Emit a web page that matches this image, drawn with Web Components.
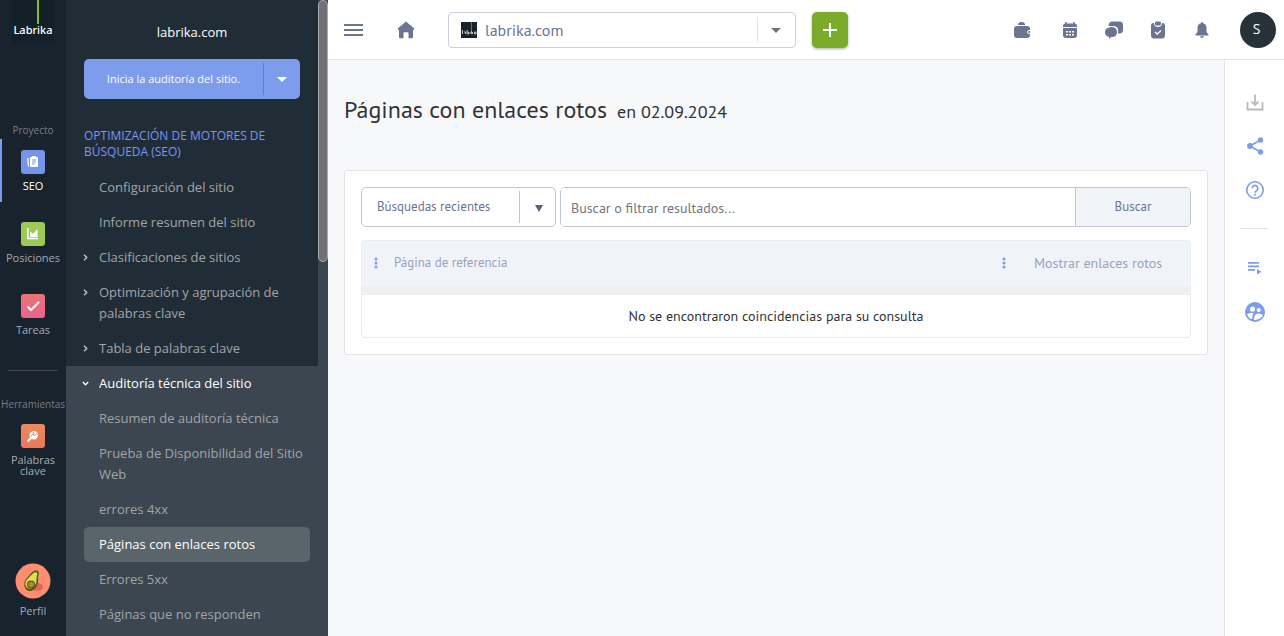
<!DOCTYPE html>
<html lang="es">
<head>
<meta charset="utf-8">
<meta name="viewport" content="width=device-width, initial-scale=1">
<title>Páginas con enlaces rotos</title>
<style>
  html, body { margin: 0; height: 100%; }
  body {
    background: #f7f8fa;
    font-family: "Open Sans", "Noto Sans", sans-serif;
    --ui: "PT Sans", "Noto Sans", "Open Sans", sans-serif;
    --accent: #7d9cec;
    --slate: #6b7591;
    --line: #e4e3ea;
  }
</style>
</head>
<body>
<lk-app>
  <lk-rail slot="rail">
    <lk-rail-caption>Proyecto</lk-rail-caption>
    <lk-rail-item icon="seo" active>SEO</lk-rail-item>
    <lk-rail-item icon="positions">Posiciones</lk-rail-item>
    <lk-rail-item icon="tasks">Tareas</lk-rail-item>
    <lk-rail-caption divided>Herramientas</lk-rail-caption>
    <lk-rail-item icon="keywords">Palabras clave</lk-rail-item>
    <lk-rail-item slot="bottom" icon="profile">Perfil</lk-rail-item>
  </lk-rail>
  <lk-sidebar slot="sidebar">
    <lk-nav-item>Configuración del sitio</lk-nav-item>
    <lk-nav-item>Informe resumen del sitio</lk-nav-item>
    <lk-nav-item arrow>Clasificaciones de sitios</lk-nav-item>
    <lk-nav-item arrow>Optimización y agrupación de palabras clave</lk-nav-item>
    <lk-nav-item arrow>Tabla de palabras clave</lk-nav-item>
    <lk-nav-group>
      <lk-nav-item arrow open>Auditoría técnica del sitio</lk-nav-item>
      <lk-nav-item>Resumen de auditoría técnica</lk-nav-item>
      <lk-nav-item>Prueba de Disponibilidad del Sitio Web</lk-nav-item>
      <lk-nav-item>errores 4xx</lk-nav-item>
      <lk-nav-item current>Páginas con enlaces rotos</lk-nav-item>
      <lk-nav-item>Errores 5xx</lk-nav-item>
      <lk-nav-item>Páginas que no responden</lk-nav-item>
    </lk-nav-group>
  </lk-sidebar>
  <lk-topbar slot="top"></lk-topbar>
  <lk-report slot="main">
    <lk-filter></lk-filter>
    <lk-table></lk-table>
  </lk-report>
  <lk-tools slot="tools"></lk-tools>
</lk-app>

<script>
const define = (name, html) => customElements.define(name, class extends HTMLElement {
  constructor() {
    super();
    const t = document.createElement('template');
    t.innerHTML = '<style>:host,*{box-sizing:border-box} button,a,input,select{font-family:inherit;color:inherit} svg{display:block;flex:none}</style>' +
      (typeof html === 'function' ? html(this) : html);
    this.attachShadow({ mode: 'open' }).append(t.content.cloneNode(true));
  }
});

define('lk-app', `
<style>
  :host { display: grid; grid-template: auto 1fr / 66px 262px 1fr 60px; height: 100vh; overflow: hidden; }
  .rail, .side { grid-row: 1 / 3; min-height: 0; display: grid; }
  .rail { grid-column: 1; } .side { grid-column: 2; }
  header { grid-area: 1 / 3 / 2 / 5; }
  main { grid-area: 2 / 3; min-width: 0; overflow: auto; }
  aside { grid-area: 2 / 4; display: grid; }
</style>
<div class="rail"><slot name="rail"></slot></div>
<div class="side"><slot name="sidebar"></slot></div>
<header><slot name="top"></slot></header>
<main><slot name="main"></slot></main>
<aside><slot name="tools"></slot></aside>`);

define('lk-rail', `
<style>
  :host { display: block; background: #18232d; color: #a5abb0; overflow: hidden; }
  nav { display: flex; flex-direction: column; height: 100%; padding-bottom: 8px; }
  .logo { width: 42px; height: 43px; margin: 0 12px 79px; background: #142028; color: #fff; text-decoration: none;
    display: grid; grid-template-rows: 23px 16px; justify-items: center; font: 500 11px/14px "Noto Sans", sans-serif; }
  .logo i { width: 2px; height: 24px; background: #8db92e; margin-left: 10px; }
  .end { margin-top: auto; }
</style>
<nav aria-label="Principal">
  <a class="logo" href="#"><i></i><span>Labrika</span></a>
  <slot></slot>
  <div class="end"><slot name="bottom"></slot></div>
</nav>`);

define('lk-rail-caption', `
<style>
  :host { display: block; text-align: center; font-size: 10px; line-height: 16px; color: #7b7e83; white-space: nowrap; padding-bottom: 1px; }
  :host([divided]) { margin-top: 15px; }
  hr { display: none; border: 0; height: 1px; background: #43474d; margin: 0 8px 25px; }
  :host([divided]) hr { display: block; }
</style><hr><slot></slot>`);

const railIcons = {
  seo: `<rect width="24" height="24" rx="3" fill="#7495ea"/><g fill="#fff"><rect x="9" y="7" width="8" height="10" rx="1"/><rect x="11" y="6" width="4" height="2"/><path d="M6 8h1.500l.5 8.500H7z"/></g><path d="M11 10h4M11 12h4M11 14h2.500" stroke="#7495ea"/>`,
  positions: `<rect width="24" height="24" rx="3" fill="#9bcb55"/><path d="M6.800 6v10.500H17" fill="none" stroke="#fff" stroke-width="1.600"/><path d="M9 15V9.500l2.800 2.200L16.500 7v8z" fill="#fff"/>`,
  tasks: `<defs><linearGradient id="g" x2="0" y2="1"><stop stop-color="#ea7379"/><stop offset="1" stop-color="#e9658a"/></linearGradient></defs><rect width="24" height="24" rx="3" fill="url(#g)"/><path d="M6.500 12.500l3.500 3.500 8-8" fill="none" stroke="#fff" stroke-width="2"/>`,
  keywords: `<defs><linearGradient id="g" x2="0" y2="1"><stop stop-color="#eb8b5b"/><stop offset="1" stop-color="#e9785e"/></linearGradient></defs><rect width="24" height="24" rx="3" fill="url(#g)"/><path d="M10.500 13.500L6.500 17.500" stroke="#fff" stroke-width="2.200"/><circle cx="12.800" cy="11.200" r="4.200" fill="#fff"/><path d="M10 12l2-2 1.500 2 2.500-3M12 8l1 2" fill="none" stroke="#e9825c"/>`,
  profile: `<circle cx="18" cy="18" r="17.500" fill="#ff8d70"/><ellipse cx="22" cy="24" rx="6" ry="4" fill="#dd6a56"/><path d="M19 8c3-1.500 6 1 4.500 4-1 3 .5 5.500-1 9-1.500 5-6 8.500-10 6.500-4-2.500-4-8.500-1-12 3-3 4-6 7.500-7.500z" fill="#4b5c1d"/><path d="M19.500 9.500c2-1 3.500.5 2.500 3-1 3 0 5-1 8-1.500 4-5 6.500-8.500 4.500-3-2-2.500-6.500 0-9 3-3 4-5 7-6.500z" fill="#dfe050"/><circle cx="16" cy="21.500" r="4" fill="#6c4c24"/><circle cx="16" cy="21.500" r="2.800" fill="#b78638"/>`
};
define('lk-rail-item', el => {
  const k = el.getAttribute('icon'), big = k === 'profile';
  return `
<style>
  :host { display: block; margin-bottom: 9px; }
  a { display: flex; flex-direction: column; align-items: center; gap: 6px; padding: ${big ? 0 : 11}px 8px ${big ? 12 : 11}px; font-size: 11px; line-height: 11px; text-align: center; text-decoration: none; border-left: 2px solid transparent; border-right: 2px solid transparent; }
  :host([active]) a { border-left-color: #7d9cec; color: #fff; }
  :host([icon=profile]) { margin-bottom: 0; }
  span { margin: 0 -8px; }
  :host([icon=keywords]) span { margin: 0 -2px; }
</style>
<a href="#"><svg width="${big ? 36 : 24}" height="${big ? 36 : 24}" aria-hidden="true">${railIcons[k]}</svg><span><slot></slot></span></a>`;
});

define('lk-sidebar', `
<style>
  :host { display: grid; grid-template-columns: 1fr 10px; background: #212d36; overflow: hidden; min-height: 0; }
  .body { min-width: 0; overflow: hidden; }
  .site { margin: 0; padding: 22px 0 17px; text-align: center; font-size: 13px; line-height: 20px; color: #fff; font-weight: 400; }
  .start { display: flex; height: 40px; margin: 0 18px; border-radius: 5px; background: var(--accent); color: #fff; overflow: hidden; align-items: center; }
  button { border: 0; background: none; padding: 0; height: 32px; font-size: 11px; }
  .go { flex: 1; padding-bottom: 2px; } .more { width: 37px; border-left: 1px solid #5c7fd0; display: grid; place-items: center; }
  h2 { margin: 29px 18px 10px; font-size: 12px; line-height: 16px; font-weight: 400; color: #7397fb; }
  .track { background: #3b4650; }
  .thumb { height: 262px; border-radius: 5px; background: #717176; border: 1px solid #a9abae; }
</style>
<div class="body">
  <p class="site">labrika.com</p>
  <div class="start"><button class="go">Inicia la auditoría del sitio.</button>
  <button class="more" aria-label="Más opciones"><svg width="10" height="5"><path d="M0 0h10L5 5z" fill="#fff"/></svg></button></div>
  <h2>OPTIMIZACIÓN DE MOTORES DE BÚSQUEDA (SEO)</h2>
  <nav><slot></slot></nav>
</div>
<div class="track"><div class="thumb"></div></div>`);

define('lk-nav-group', `<style>:host { display: block; background: #3b4650; padding-bottom: 8px; }</style><slot></slot>`);

define('lk-nav-item', `
<style>
  :host { display: block; padding: 0 8px 0 18px; color: #a0a5a9; }
  a { display: grid; grid-template-columns: 15px 1fr; padding: 7px 0; border-radius: 5px; font-size: 13px; line-height: 21px; text-decoration: none; }
  span { grid-column: 2; }
  svg { display: none; grid-area: 1 / 1; margin: 7px 0 0 -2px; fill: none; stroke: #c6c9cc; stroke-width: 1.300; }
  :host([arrow]) svg { display: block; }
  :host([open]) svg { transform: rotate(90deg); stroke: #fff; }
  :host([open]), :host([current]) { color: #fff; }
  :host([current]) a { background: #59656a; }
</style>
<a href="#"><svg width="7" height="7" aria-hidden="true"><path d="M2 .8L4.800 3.500 2 6.200"/></svg><span><slot></slot></span></a>`);

define('lk-topbar', `
<style>
  :host { display: flex; align-items: center; height: 60px; padding: 0 8px 0 16px; background: #fff; border-bottom: 1px solid var(--line); color: var(--slate); font-family: var(--ui); }
  button { border: 0; background: none; padding: 0; display: grid; place-items: center; }
  .menu { width: 20px; height: 24px; } .home { width: 20px; height: 24px; margin: 0 32px; }
  .site { display: flex; align-items: center; width: 348px; height: 36px; border: 1px solid #cfcedd; border-radius: 4px; padding-left: 12px; gap: 8px; }
  select { appearance: none; flex: 1; min-width: 0; height: 24px; border: 0; border-right: 1px solid #e4e3ea; background: none; padding: 0; font-size: 16px; outline: 0; }
  .caret { margin: 0 7px 0 -2px; }
  .add { width: 36px; height: 36px; margin-left: 16px; border-radius: 5px; background: #7cab2b; box-shadow: 0 1px 3px #0005; }
  .icons { margin-left: auto; display: flex; align-items: center; gap: 24px; }
  .icons button { width: 20px; height: 24px; }
  .icons .calendar { margin-left: 4px; }
  .icons .user { width: 36px; height: 36px; border-radius: 50%; background: #263238; color: #fff; font: 14px "Open Sans", sans-serif; margin-left: 4px; padding: 0 3px 2px 0; }
  .icons svg { fill: currentColor; }
</style>
<button class="menu" aria-label="Menú"><svg width="20" height="14" fill="#6b7591"><path d="M0 1h19v2H0zM0 6h19v2H0zM0 11h19v2H0z"/></svg></button>
<button class="home" aria-label="Inicio"><svg width="18" height="18" fill="#6b7591"><path d="M9 .5l8.500 7.300-1 1.200H16v7.500q0 .8-.8.8h-3.700V12q0-.8-.8-.8H7.300q-.8 0-.8.800v5.300H2.800q-.8 0-.8-.8V9h-.5l-1-1.200z"/></svg></button>
<label class="site"><svg width="16" height="16" role="img" aria-label="Sitio"><rect width="16" height="16" fill="#17232a"/><path d="M10.500 0v9" stroke="#628023"/><path d="M1.500 8v4M3 10h1.500v2M6 8v4h1.500v-2H6M9 12v-2M10.500 12v-3M12 10l-1 1 1 1M13.500 10H15v2h-1.500z" stroke="#b9bfc2" fill="none"/></svg>
<select><option>labrika.com</option></select><svg class="caret" width="24" height="24"><path d="M7 10h10l-5 5z" fill="#757575"/></svg></label>
<button class="add" aria-label="Añadir"><svg width="14" height="14"><path d="M7 0v14M0 7h14" stroke="#fff" stroke-width="2"/></svg></button>
<div class="icons">
  <button aria-label="Cartera"><svg width="18" height="18"><path d="M5 4q0-3 3.500-3T12 4z"/><rect x="1" y="5" width="16" height="12" rx="3"/><path d="M18 9.500h-2a1.500 1.500 0 000 3H18" fill="none" stroke="#fff" stroke-width="1"/></svg></button>
  <button class="calendar" aria-label="Calendario"><svg width="18" height="18"><path d="M5 1v4M13 1v4" stroke="currentColor" stroke-width="1.500"/><path d="M2 6V5q0-2.500 2.500-2.500h9Q16 2.500 16 5v1zM2 7h14v7q0 3-3 3H5q-3 0-3-3z"/><path d="M5 10h2v1.500H5zM8 10h2v1.500H8zM11 10h2v1.500h-2zM5 13h2v1.500H5zM8 13h2v1.500H8zM11 13h2v1.500h-2z" fill="#fff"/></svg></button>
  <button aria-label="Mensajes"><svg width="18" height="18"><path d="M7 .5h7.500Q18 .5 18 4v5q0 3-3 3.500h-2Q14.500 5.500 9 5H3.500Q4 .5 7 .5z"/><path d="M6 6q6 0 6 5t-5 5H6l-2 2v-2.300Q0 15 0 11t6-5z"/></svg></button>
  <button aria-label="Tareas"><svg width="18" height="18"><path d="M4 2h1q0 4 4 4t4-4h1q2 0 2 2.500V14q0 3.500-3 3.500H5q-3 0-3-3.500V4.500Q2 2 4 2z"/><rect x="6" y=".5" width="6" height="4" rx="1.500"/><path d="M6 11l2.200 2L12 9.500" fill="none" stroke="#fff" stroke-width="1.300"/></svg></button>
  <button aria-label="Notificaciones"><svg width="18" height="18"><path d="M9 1q1 0 1 1.200 3.500.8 3.500 5V11l2 2.500v1h-13v-1l2-2.500V7.200q0-4.200 3.500-5Q8 1 9 1zM7 15.200h4Q10.500 17 9 17t-2-1.800z"/></svg></button>
  <button class="user" aria-label="Cuenta">S</button>
</div>`);

define('lk-report', `
<style>
  :host { display: block; padding: 32px 16px; font-family: var(--ui); color: #333; }
  h1 { margin: 0 0 42px; height: 36px; font-size: 24px; line-height: 36px; font-weight: 400; display: flex; align-items: baseline; gap: 10px; }
  small { font-size: 18px; }
  section { background: #fff; border: 1px solid #e9e2e8; border-radius: 3px; padding: 16px; display: flex; flex-direction: column; gap: 13px; }
</style>
<h1>Páginas con enlaces rotos <small>en 02.09.2024</small></h1>
<section><slot></slot></section>`);

define('lk-filter', `
<style>
  :host { display: flex; gap: 4px; height: 40px; }
  button { color: var(--slate); font-size: 13px; border: 0; background: none; padding: 0; }
  .recent { width: 195px; border: 1px solid #c3c5ce; border-radius: 5px; display: flex; align-items: center; text-align: left; padding-left: 15px; }
  .recent span { flex: 1; padding-bottom: 2px; } .recent i { width: 36px; height: 32px; border-left: 1px solid #c3c5ce; display: grid; place-items: center; padding: 3px 0 0 3px; }
  form { flex: 1; display: flex; min-width: 0; border: 1px solid #c3c5ce; border-radius: 5px; overflow: hidden; }
  input { flex: 1; min-width: 0; border: 0; outline: 0; padding: 2px 10px 0; font-size: 14px; }
  input::placeholder { color: #75757a; opacity: 1; }
  .find { width: 115px; border-left: 1px solid #c3c5ce; background: #f0f3f7; padding-bottom: 2px; }
</style>
<button class="recent"><span>Búsquedas recientes</span><i><svg width="8" height="7"><path d="M0 0h8L4 7z" fill="#53607f"/></svg></i></button>
<form onsubmit="return false"><input type="text" aria-label="Buscar" placeholder="Buscar o filtrar resultados..."><button class="find">Buscar</button></form>`);

define('lk-table', `
<style>
  :host { display: block; border: 1px solid #e6edf6; border-radius: 4px; overflow: hidden; }
  table { width: 100%; border-collapse: separate; border-spacing: 0; table-layout: fixed; }
  th { background: #f0f3f7; height: 54px; border-bottom: 9px solid #efefef; padding: 0 0 2px 12px; font-weight: 400; color: #9aa3be; font-size: 13px; text-align: left; }
  th:last-child { width: 200px; font-size: 14px; }
  th div { display: flex; align-items: center; gap: 16px; }
  th:last-child div { gap: 28px; }
  td { text-align: center; height: 42px; padding: 0; font-size: 14px; color: #333; }
</style>
<table><thead><tr>
<th><div><svg width="4" height="12" fill="#7d9cec"><circle cx="2" cy="2" r="1.500"/><circle cx="2" cy="6" r="1.500"/><circle cx="2" cy="10" r="1.500"/></svg>Página de referencia</div></th>
<th><div><svg width="4" height="12" fill="#7d9cec"><circle cx="2" cy="2" r="1.500"/><circle cx="2" cy="6" r="1.500"/><circle cx="2" cy="10" r="1.500"/></svg>Mostrar enlaces rotos</div></th>
</tr></thead><tbody><tr><td colspan="2">No se encontraron coincidencias para su consulta</td></tr></tbody></table>`);

define('lk-tools', `
<style>
  :host { display: flex; flex-direction: column; align-items: center; background: #fff; border-left: 1px solid var(--line); padding-top: 30px; gap: 20px; color: var(--accent); }
  button { border: 0; background: none; padding: 0; width: 24px; height: 24px; }
  .muted { color: #b8babd; }
  hr { width: 27px; height: 1px; border: 0; background: #e4e3ea; margin: 6px 0 7px; }
  svg { fill: currentColor; }
</style>
<button class="muted" aria-label="Descargar"><svg width="24" height="24"><path d="M4.500 12v7.500h15V12M12 4.500v10M8.500 11.500L12 15l3.500-3.500" fill="none" stroke="currentColor" stroke-width="1.800"/></svg></button>
<button aria-label="Compartir"><svg width="24" height="24"><circle cx="7" cy="12" r="2.900"/><circle cx="17.500" cy="6" r="2.700"/><circle cx="17.500" cy="18" r="2.700"/><path d="M17.500 6L7 12l10.500 6" fill="none" stroke="currentColor" stroke-width="1.700"/></svg></button>
<button aria-label="Ayuda"><svg width="24" height="24"><circle cx="12" cy="12" r="8.200" fill="none" stroke="currentColor" stroke-width="1.600"/><path d="M9.200 10.200a2.800 2.800 0 115 1.800c-.8 1-2.200 1.200-2.200 2.800M12 15.800v1.800" fill="none" stroke="currentColor" stroke-width="1.700"/></svg></button>
<hr>
<button aria-label="Lista de reproducción"><svg width="24" height="24"><path d="M5 6h11v1.700H5zM5 9.500h11v1.700H5zM5 13h7v1.700H5zM14 13l4.500 2.700L14 18.500z"/></svg></button>
<button aria-label="Usuarios"><svg width="24" height="24"><circle cx="12" cy="12" r="10"/><g fill="#fff"><circle cx="9.500" cy="9" r="2.600"/><circle cx="15.700" cy="10" r="2"/><path d="M4 14.500q3-2.500 6.500-1.500-1.500 1.800-1.500 6.200-3.500-1-5-4.700zM11 19.900q-.3-6 4.500-6.300 3 0 4.500 1.700-2.500 4.800-9 4.600z"/></g></svg></button>`);
</script>
</body>
</html>
